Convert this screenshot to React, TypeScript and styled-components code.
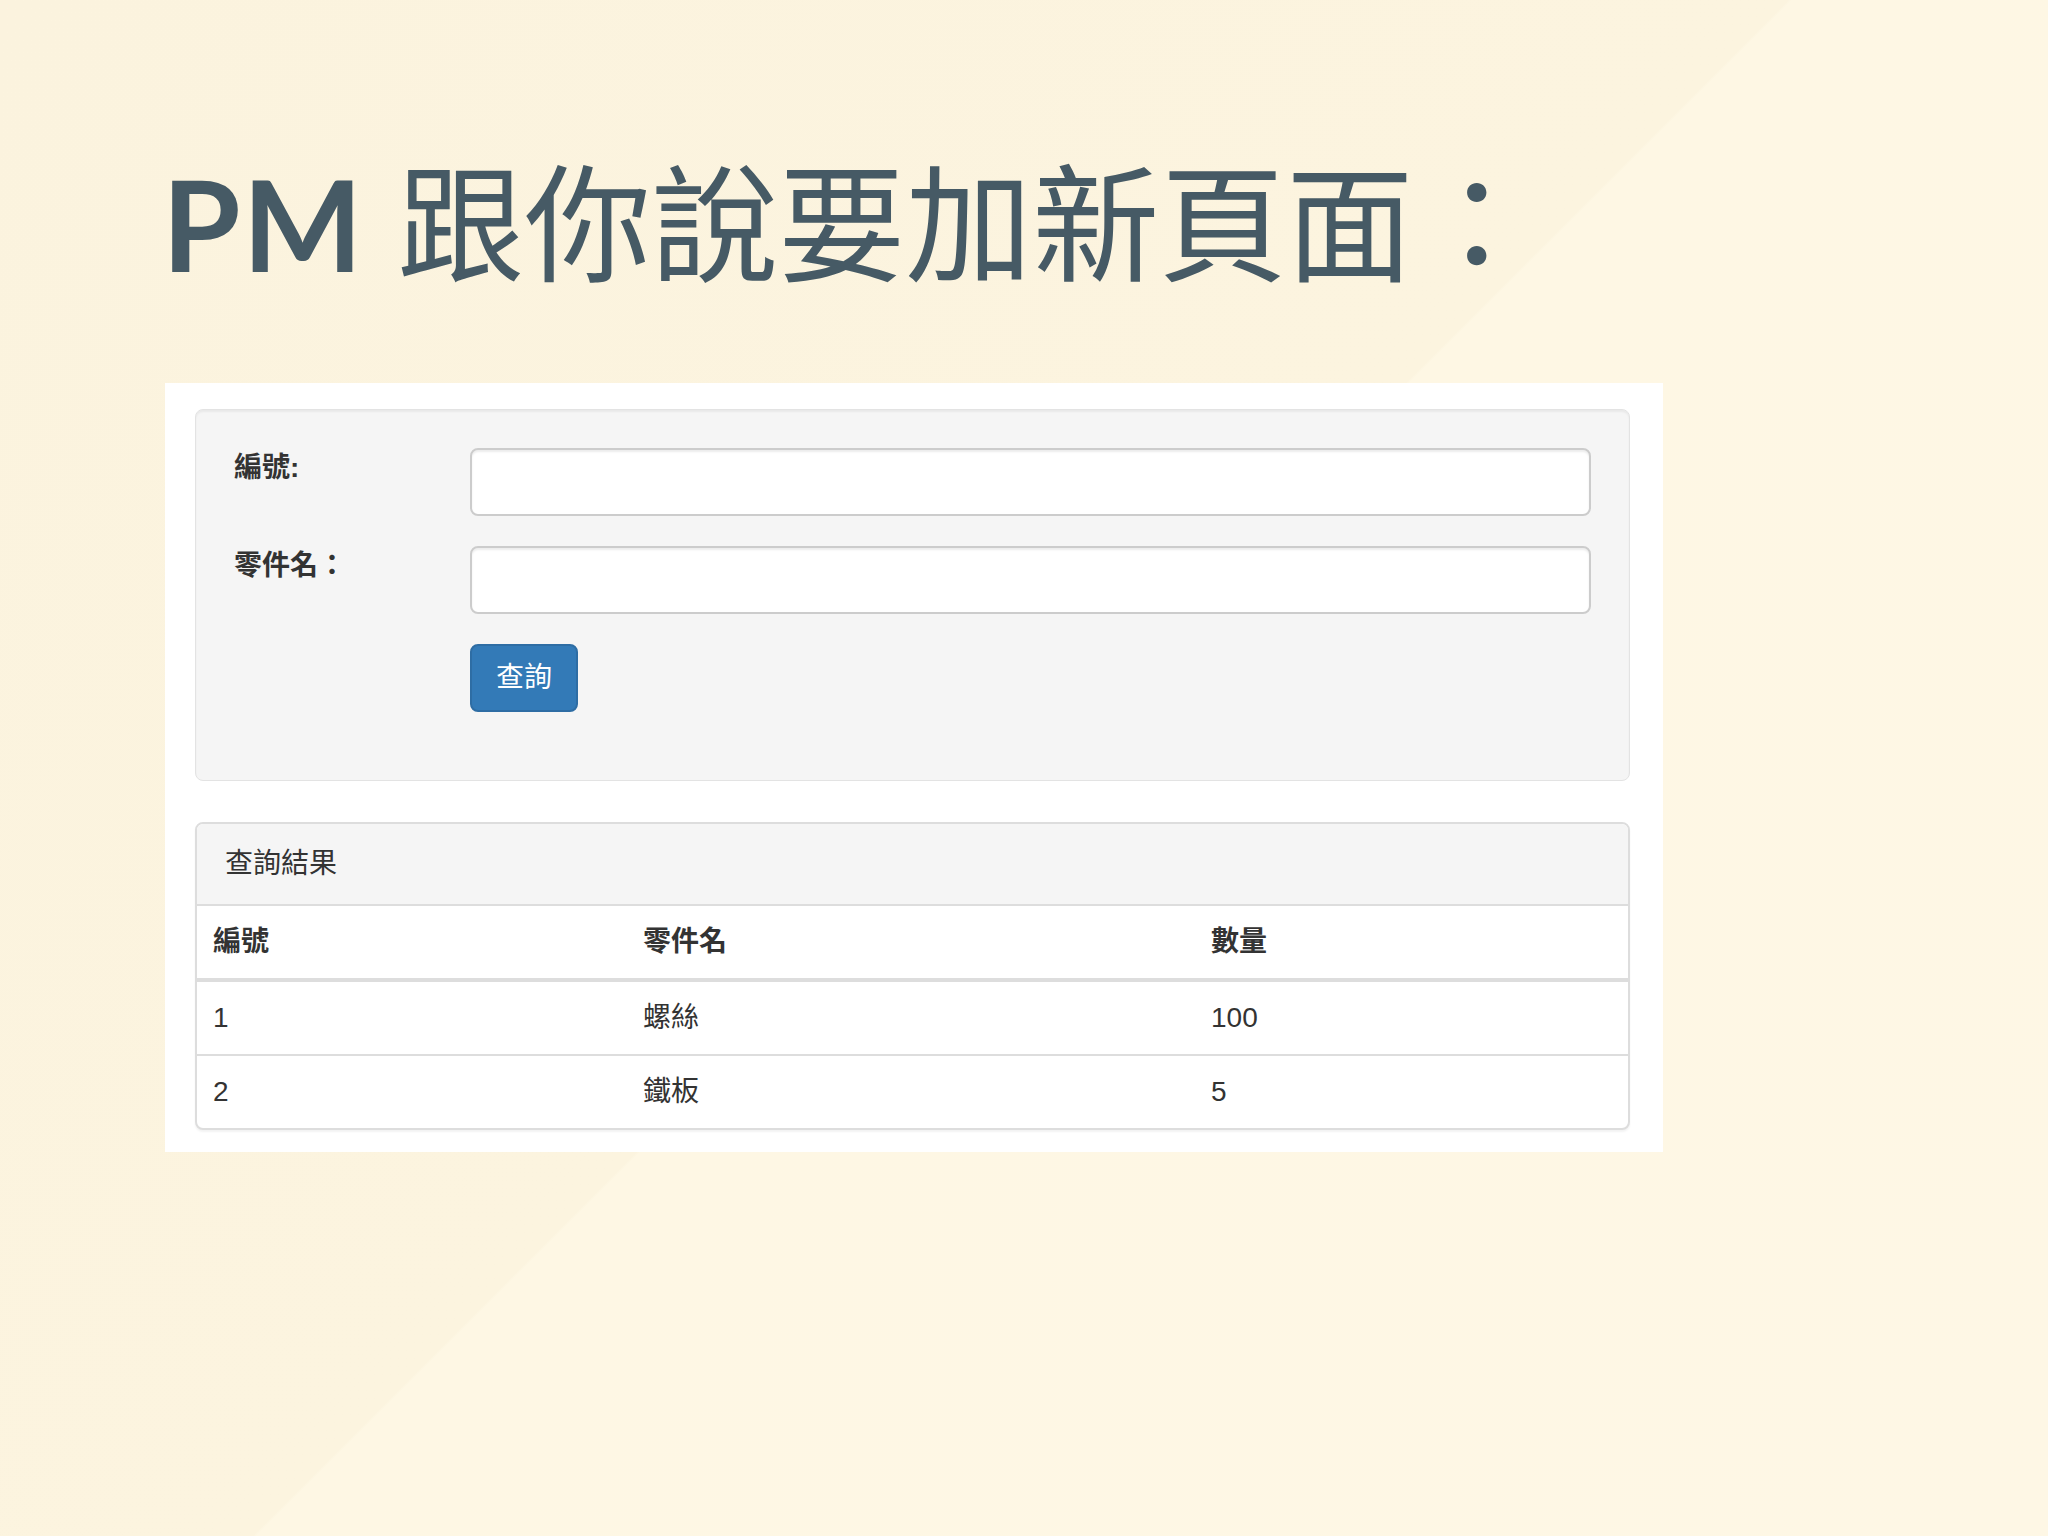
import React from "react";
import styled, { createGlobalStyle } from "styled-components";

const GlobalStyle = createGlobalStyle`
  html, body {
    margin: 0;
    padding: 0;
  }
  body {
    background: #fef7e4;
  }
  * {
    box-sizing: border-box;
  }
`;

const uiFont = `"Liberation Sans", "Noto Sans CJK TC", sans-serif`;

const Slide = styled.main`
  width: 2048px;
  height: 1536px;
  overflow: hidden;
  padding: 148px 0 0 162px;
  background: linear-gradient(135deg, #fbf3de 0%, #fcf4df 49.9%, #fef7e4 50%, #fef7e5 100%);
`;

const Title = styled.h1`
  margin: 0;
  font-family: Lato, "Noto Sans CJK TC", sans-serif;
  font-size: 127px;
  line-height: 150px;
  font-weight: 400;
  color: #465a65;
  white-space: nowrap;

  > strong {
    font-weight: 700;
    letter-spacing: 2px;
  }
`;

const Shot = styled.section`
  width: 1498px;
  margin: 85px 0 0 3px;
  padding: 26px 33px 22px 30px;
  background: #ffffff;
  font-family: ${uiFont};
  font-size: 28px;
  line-height: 40px;
  color: #333;
`;

const Well = styled.form`
  background: #f5f5f5;
  border: 1px solid #e3e3e3;
  border-radius: 8px;
  box-shadow: inset 0 2px 2px rgba(0, 0, 0, 0.05);
  padding: 38px;
  margin-bottom: 41px;
`;

const FormGroup = styled.div`
  display: grid;
  grid-template-columns: 236px 1fr;
  align-items: start;
  margin-bottom: 30px;
`;

const Label = styled.label`
  font-weight: 700;
  line-height: 40px;
`;

const Input = styled.input`
  display: block;
  width: 100%;
  height: 68px;
  padding: 12px 24px;
  font: inherit;
  color: #555;
  background: #fff;
  border: 2px solid #ccc;
  border-radius: 8px;
  box-shadow: inset 0 2px 2px rgba(0, 0, 0, 0.075);
  outline: none;
`;

const Button = styled.button`
  grid-column: 2;
  justify-self: start;
  height: 68px;
  padding: 12px 24px;
  font: inherit;
  color: #fff;
  background: #337ab7;
  border: 2px solid #2e6da4;
  border-radius: 8px;
  cursor: pointer;
`;

const Panel = styled.div`
  border: 2px solid #ddd;
  border-radius: 8px;
  background: #fff;
  overflow: hidden;
  box-shadow: 0 2px 2px rgba(0, 0, 0, 0.05);
`;

const PanelHeading = styled.div`
  background: #f5f5f5;
  border-bottom: 2px solid #ddd;
  padding: 20px 28px;
`;

const Table = styled.table`
  width: 100%;
  border-collapse: collapse;
  table-layout: fixed;
`;

const Th = styled.th`
  text-align: left;
  font-weight: 700;
  padding: 16px;
  line-height: 40px;
  border-bottom: 4px solid #ddd;
  vertical-align: bottom;
`;

const Td = styled.td`
  padding: 16px;
  line-height: 40px;
  border-top: 2px solid #ddd;
`;

const rows = [
  { id: 1, name: "螺絲", qty: 100 },
  { id: 2, name: "鐵板", qty: 5 },
];

const App = () => {
  return (
    <>
      <GlobalStyle />
      <Slide>
        <Title>
          <strong>PM</strong> 跟你說要加新頁面：
        </Title>

        <Shot>
          <Well onSubmit={(e) => e.preventDefault()}>
            <FormGroup>
              <Label htmlFor="part-id">編號:</Label>
              <Input id="part-id" type="text" />
            </FormGroup>
            <FormGroup>
              <Label htmlFor="part-name">零件名：</Label>
              <Input id="part-name" type="text" />
            </FormGroup>
            <FormGroup>
              <Button type="submit">查詢</Button>
            </FormGroup>
          </Well>

          <Panel>
            <PanelHeading>查詢結果</PanelHeading>
            <Table>
              <colgroup>
                <col style={{ width: 430 }} />
                <col style={{ width: 568 }} />
                <col />
              </colgroup>
              <thead>
                <tr>
                  <Th>編號</Th>
                  <Th>零件名</Th>
                  <Th>數量</Th>
                </tr>
              </thead>
              <tbody>
                {rows.map((row) => (
                  <tr key={row.id}>
                    <Td>{row.id}</Td>
                    <Td>{row.name}</Td>
                    <Td>{row.qty}</Td>
                  </tr>
                ))}
              </tbody>
            </Table>
          </Panel>
        </Shot>
      </Slide>
    </>
  );
};

export default App;
